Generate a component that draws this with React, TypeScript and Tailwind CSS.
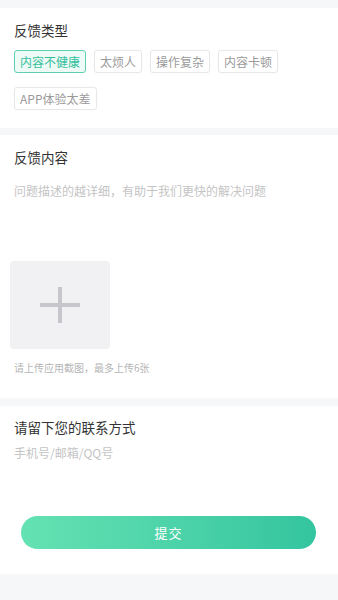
import { useState } from 'react'

const tags = ['内容不健康', '太烦人', '操作复杂', '内容卡顿', 'APP体验太差']

export default function App() {
  const [active, setActive] = useState(0)

  return (
    <div
      className="w-[338px] min-h-[600px] bg-[#f6f7f9] pt-[8px] pb-[26px]"
      style={{ fontFamily: '"Noto Sans CJK SC", "Noto Sans", sans-serif' }}
    >
      {/* 反馈类型 */}
      <section className="bg-white h-[120px] px-[14px] pt-[13px]">
        <h2 className="text-[13.5px] leading-[18px] text-[#333]">反馈类型</h2>
        <div className="mt-[11px] flex flex-wrap gap-x-[8px] gap-y-[14px]">
          {tags.map((t, i) => (
            <button
              key={t}
              onClick={() => setActive(i)}
              className={`h-[23px] px-[5px] rounded-[3px] border text-[12px] leading-[21px] ${
                i === active
                  ? 'border-[#5fcfb3] bg-[#eefaf6] text-[#35bf9c]'
                  : 'border-[#e8e8e8] bg-white text-[#9a9a9a] shadow-[0_0_2px_rgba(0,0,0,0.04)]'
              }`}
            >
              {t}
            </button>
          ))}
        </div>
      </section>

      {/* 反馈内容 */}
      <section className="mt-[7px] bg-white h-[263px] pt-[13px]">
        <h2 className="px-[14px] text-[13.5px] leading-[18px] text-[#333]">反馈内容</h2>
        <div className="px-[14px] mt-[17px] text-[12px] leading-[16px] text-[#c4c4c4]">
          问题描述的越详细，有助于我们更快的解决问题
        </div>
        <div className="ml-[10px] mt-[62px] w-[100px] h-[88px] rounded-[4px] bg-[#f1f1f3] flex items-center justify-center">
          <svg width="40" height="36" viewBox="0 0 40 36">
            <rect x="0" y="16" width="40" height="4" fill="#c6c6cc" />
            <rect x="18" y="0" width="4" height="36" fill="#c6c6cc" />
          </svg>
        </div>
        <div className="px-[14px] mt-[12px] text-[10px] leading-[14px] text-[#b5b5b5]">
          请上传应用截图，最多上传6张
        </div>
      </section>

      {/* 联系方式 */}
      <section className="mt-[8px] bg-white h-[168px] pt-[12px]">
        <h2 className="px-[14px] text-[13.5px] leading-[18px] text-[#333]">请留下您的联系方式</h2>
        <div className="px-[14px] mt-[9px] text-[12px] leading-[16px] text-[#c4c4c4]">
          手机号/邮箱/QQ号
        </div>
        <div className="mt-[55px] px-[21px] pr-[22px]">
          <button className="w-full h-[33px] rounded-full bg-gradient-to-r from-[#64e2b3] to-[#33c59f] text-white text-[13px] tracking-[1px]">
            提交
          </button>
        </div>
      </section>
    </div>
  )
}
